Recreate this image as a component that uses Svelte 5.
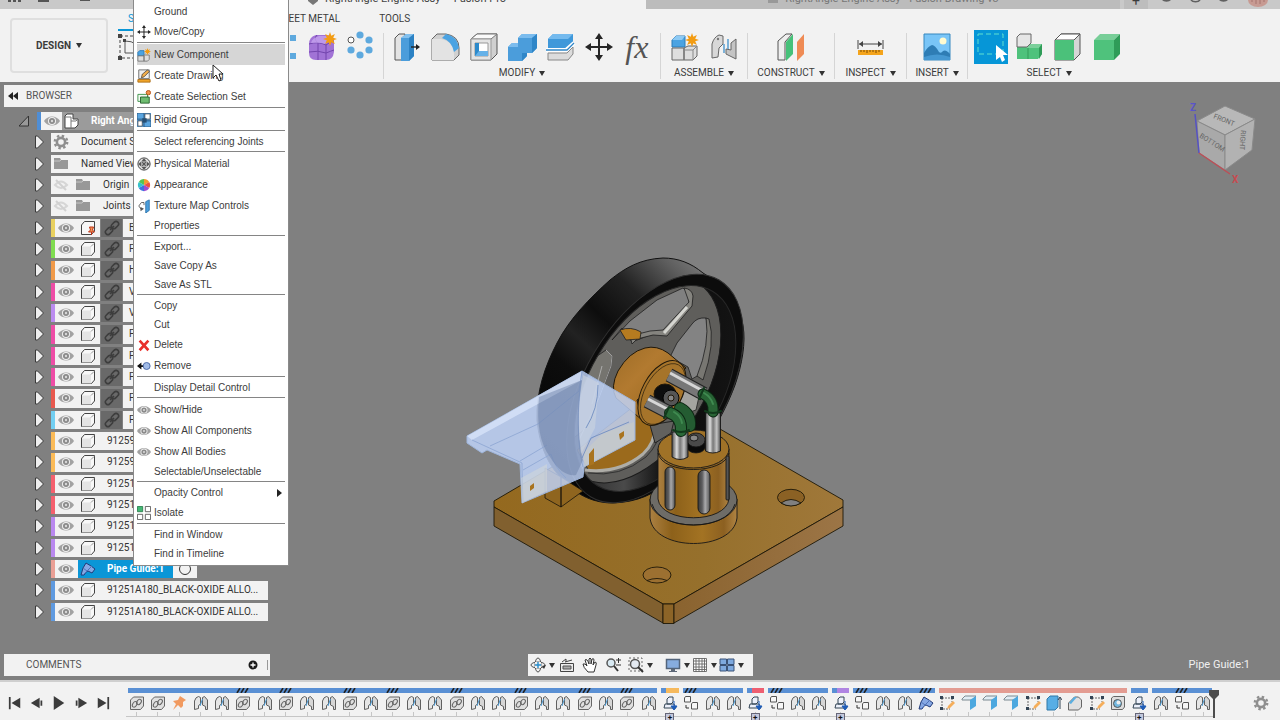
<!--
    App.svelte

    CAD assembly workspace: title strip, ribbon, browser tree, model viewport,
    navigation bar, timeline, and the component context menu.
-->
<script lang="ts">
    type Tool = { icon: string; label: string; active?: boolean };
    type Group = { name: string; size: string; tools: Tool[] };
    type MenuItem = { label: string; icon?: string; sub?: boolean; active?: boolean } | null;

    const EYE =
        '<path d="M0 8C3.500 2 12.500 2 16 8C12.500 14 3.500 14 0 8Z" fill="#a2a2a2"/><circle cx="8" cy="8" r="4" fill="#f0f0f0"/><circle cx="8" cy="8" r="3" fill="#8a8a8a"/><circle cx="8" cy="8" r="1.200" fill="#d8d8d8"/>';
    const STAR = (x: number, y: number, r: number) => {
        let pts = "";
        for (let i = 0; i < 16; i++) {
            const a = (i * Math.PI) / 8;
            const d = i % 2 ? r * 0.5 : r;
            pts += `${(x + d * Math.cos(a)).toFixed(1)},${(y + d * Math.sin(a)).toFixed(1)} `;
        }
        return `<polygon points="${pts}" fill="#f39c12"/>`;
    };
    const GEAR =
        '<circle cx="8" cy="8" r="4.1" fill="none" stroke="#8f8f8f" stroke-width="2.6"/><circle cx="8" cy="8" r="6.2" fill="none" stroke="#8f8f8f" stroke-width="2.4" stroke-dasharray="2.4 2.47"/>';
    const MOVE =
        '<path d="M14 0l4 6h-3v7h7v-3l6 4-6 4v-3h-7v7h3l-4 6-4-6h3v-7H6v3l-6-4 6-4v3h7V6h-3z" fill="#262626"/>';

    // 28x28 ribbon artwork
    const ribbonArt: Record<string, string> = {
        sketch: '<rect x="3" y="3" width="24" height="22" fill="none" stroke="#444" stroke-dasharray="3 2"/><path d="M8 8v12h14M8 8q14 0 14 12" fill="none" stroke="#555"/><path d="M1 1h4v4H1zM1 23h4v4H1zM6 6h3v3H6z" fill="#444"/>',
        box: '<path d="M3 9l6-6h16v16l-6 6H3z" fill="#ddd" stroke="#555"/>',
        pattern: '<path d="M2 2h6v6H2zM20 2h6v6h-6zM2 20h6v6H2zM20 20h6v6h-6z" fill="#5ea9de"/>',
        form: `<path d="M1 11q0-7 7-9h11q7 0 7 6v11q-1 8-8 8H8q-7 0-7-7z" fill="#a173d6"/><path d="M1 11q9-3 17 1q5-4 8-4M18 12v15M10 10v17M1 19q9-2 17 1q5-2 8-3M9 2q-4 4 1 8" fill="none" stroke="#7245ad"/><path d="M3 10q1-5 8-7h7q4 1 2 5l-3 3q-6-2-14-1z" fill="#c6a3ef" opacity=".8"/>${STAR(22, 6, 7)}`,
        circular: '<circle cx="5" cy="7" r="3" fill="#fff" stroke="#555"/><g fill="#5ea9de"><circle cx="14" cy="2" r="3.600"/><circle cx="23" cy="7" r="3.600"/><circle cx="23" cy="17" r="3.600"/><circle cx="14" cy="22" r="3.600"/><circle cx="5" cy="17" r="3.600"/></g>',
        press: '<path d="M2 5l4-4h6v26H2z" fill="#e3e3e3" stroke="#555"/><path d="M8 5l5-4h8v22l-5 5H8z" fill="#4b9ddb"/><path d="M8 5l5-4h8l-5 4z" fill="#82c0ee"/><path d="M16 5l5-4v22l-5 5z" fill="#2c82c4"/><path d="M18 14h6" stroke="#222" stroke-width="1.4"/><path d="M23 11l4 3-4 3z" fill="#222"/>',
        fillet: '<path d="M1 6l5-5h9q13 2 13 14v7l-5 5H1z" fill="#d0d0d0" stroke="#666"/><path d="M1 6h9q12 2 13 15v6H1z" fill="#e3e3e3"/><path d="M11 5l4-4q11 2 13 14l-5 4Q21 8 11 5z" fill="#4ba3e2"/>',
        shell: '<path d="M1 6l6-5h20v20l-6 6H1z" fill="#d0d0d0" stroke="#555"/><path d="M1 6l6-5h20l-6 5z" fill="#fafafa" stroke="#777"/><path d="M1 6h20v21H1z" fill="#e4e4e4" stroke="#999"/><path d="M5 10h13v13H5z" fill="#fff" stroke="#999"/><path d="M5 10h4v8h9v5H5z" fill="#2c8acb"/><path d="M9 18l-4 5h13v-5z" fill="#65b1e8"/>',
        combine: '<path d="M0 14l4-4h6V5l4-4h15v14l-5 5h-5v3l-5 5H0z" fill="#4b9ddb"/><path d="M10 5l4-4h15l-5 4zM0 14l4-4h6v4z" fill="#7bbcee"/><path d="M24 5l5-4v14l-5 5h-5v3l-5 5v-8h10z" fill="#2f86c8"/>',
        split: '<path d="M2 6l5-5h20v9l-5 5H2z" fill="#3f98da"/><path d="M2 6l5-5h20l-5 5z" fill="#74baee"/><path d="M0 17h20l8-7" fill="none" stroke="#fff" stroke-width="4"/><path d="M0 17h21l7-7" fill="none" stroke="#2f86c8" stroke-width="1.3"/><path d="M2 20h19l6-6v7l-5 6H2z" fill="#dcdcdc" stroke="#888"/>',
        move: MOVE,
        newComp: `<path d="M1 7l4-4h9v11H1z" fill="#4ba3e2" stroke="#2c7db8"/><path d="M1 7l4-4h9l-3 4z" fill="#8dcaf4"/><path d="M1 15h12v12H1zM13 15l4-2h9v10l-4 4h-9z" fill="#dedede" stroke="#666"/><path d="M13 17h9l4-4M22 17v10M13 15v12" stroke="#888" fill="none"/>${STAR(21, 7, 7)}`,
        joint: '<path d="M2 25V11q2-7 7-9l4 1v8l-4 4-1 9z" fill="#d8d8d8" stroke="#666"/><path d="M26 26V6l-5 4v7l-5-1v5z" fill="#c4c4c4" stroke="#666"/><path d="M18 6v10M14 11v9" stroke="#3188c7" stroke-width="1.2"/><circle cx="8" cy="6" r="1.200" fill="#777"/>',
        construct: '<path d="M1 8l8-7h6L8 9v18H1z" fill="#eee" stroke="#555"/><path d="M9 9l7-8v20l-7 7z" fill="#46c179"/><path d="M20 9l7-8v20l-7 7z" fill="#ef8b55"/>',
        measure: '<path d="M1 7v9M26 7v9M2 11h23" stroke="#444" fill="none"/><path d="M2 11l4-3v6zM25 11l-4-3v6z" fill="#444"/><path d="M1 17h25v5H1z" fill="#f4a41c"/><path d="M4 17v2M7 17v2M10 17v3M13 17v2M16 17v2M19 17v3M22 17v2" stroke="#7c4b00"/>',
        insert: '<path d="M1 1h26v26H1z" fill="#79c5f7" stroke="#3788bf"/><circle cx="20" cy="8" r="3.5" fill="#fffbd0"/><path d="M1 20q4-7 8-8 3 0 7 7 2 2 4-1 3-2 7 3v6H1z" fill="#2e7db5"/><path d="M1 24q13-5 26 0v3H1z" fill="#4598d2"/>',
        select: '<path d="M1 1h25v20H1z" fill="none" stroke="#5fe0d0" stroke-dasharray="5 3"/><path d="M19 12v15l4-3 2 5 3-2-2-5h5z" fill="#fff"/>',
        selComp: '<path d="M1 14h9l4-3h12v10l-4 5H1z" fill="#4fc27c"/><path d="M14 11h12l-3 4H10z" fill="#7bd09b"/><path d="M23 15l3-4v10l-3 5z" fill="#2f9c58"/><path d="M12 15v11" stroke="#349b59"/><path d="M1 4l3-3h11v9l-4 4H1z" fill="#e6e6e6" stroke="#666"/>',
        selFace: '<path d="M1 7l6-6h19v20l-6 6H1z" fill="#d6d6d6" stroke="#555"/><path d="M1 7l6-6h19l-6 6z" fill="#fff" stroke="#555"/><path d="M1 7h19v20H1z" fill="#4bc17a"/>',
        selBody: '<path d="M1 7l6-6h20l-6 6z" fill="#78ce98"/><path d="M1 7h20v20H1z" fill="#4fc27c"/><path d="M21 7l6-6v20l-6 6z" fill="#2f9c58"/>',
    };

    // 16x16 artwork used by the menu, tree and timeline
    const art: Record<string, string> = {
        eye: EYE,
        eyeOff: '<g opacity=".45"><path d="M2 8q6-7 12 0q-6 6-12 0z" fill="none" stroke="#b5b5b5" stroke-width="2"/><path d="M3 3l10 10" stroke="#aaa" stroke-width="2"/></g>',
        gear: GEAR,
        folder: '<path d="M1 2h6l1 2h7v9H1z" fill="#989898"/><path d="M1 5h6l1-1" fill="none" stroke="#c5c5c5"/>',
        cube: '<path d="M1.500 5l3-3.500h10v9.500l-3 3.500h-10z" fill="#f8f8f8" stroke="#444" stroke-linejoin="round"/><path d="M2 5.500h9v9H2z" fill="#e4e4e4"/><path d="M11 5.500l3-3" stroke="#999"/>',
        cubePin: '<path d="M1.500 5l3-3.500h10v9.500l-3 3.500h-10z" fill="#f8f8f8" stroke="#444"/><path d="M9.500 7h4l-1 3 2 2h-6l2-2z" fill="#f39a58" stroke="#bd3216"/><path d="M11.500 12v3" stroke="#bd3216"/>',
        assembly: '<path d="M1 3l2-2h6v5h5v6l-3 3H1z" fill="#fff" stroke="#444"/><path d="M1 4h6v11M7 8h5l2-2" fill="none" stroke="#777"/>',
        link: '<g fill="none" stroke="#3d3d3d" stroke-width="1.600"><rect x="7" y="2.500" width="8" height="5" rx="2.500" transform="rotate(-45 11 5)"/><rect x="1" y="8.500" width="8" height="5" rx="2.500" transform="rotate(-45 5 11)"/><path d="M6 10l4-4"/></g>',
        pipe: '<path d="M1 14l2-7 3-5 5 3 4 3-3 4-4-2-2 1-2 3z" fill="#86a8e4" stroke="#223b78"/><path d="M3 7l4 3 5-5M7 10l-4 4" stroke="#4f72b7" fill="none"/>',
        move: `<g transform="scale(.57)">${MOVE}</g>`,
        newComp: `<path d="M1 5l2-2h5v6H1z" fill="#4ba3e2" stroke="#2c7db8"/><path d="M1 9h7v6H1zM8 8h6v5l-2 2H8z" fill="#ddd" stroke="#777"/>${STAR(12, 4, 4)}`,
        drawing: '<path d="M2 1h12v10H2z" fill="#eee" stroke="#666"/><path d="M5 10l1-4 6-5 2 2-6 6z" fill="#f3ae4a" stroke="#333" stroke-width=".8"/><path d="M1 12h14v3H1z" fill="#f0a429" stroke="#aa6b13"/>',
        selectSet: '<path d="M1 5h11v8H1z" fill="#f2faf2" stroke="#348b40"/><path d="M4 8h10v7H4z" fill="#6ebc70" stroke="#245c28"/><circle cx="13" cy="3" r="2.500" fill="#ef9147" stroke="#b44d0d"/>',
        rigid: '<path d="M0 0h16v16H0z" fill="#4d98d8"/><path d="M9 1h6v6H9zM1 9h5v6H1z" fill="#fff" stroke="#4f565c"/><path d="M0 0h8v7H0zM8 9h8v7H8z" fill="#5aa5e0" stroke="#29567d"/><path d="M6 6h5v5H6z" fill="#264f73"/>',
        material: '<circle cx="8" cy="8" r="7" fill="#ddd" stroke="#333"/><path d="M8 1.500l3 3.500H5zM8 14.500l3-3.500H5zM1.500 8L5 5v6zM14.500 8L11 5v6z" fill="#555"/><path d="M6 6l4 4M10 6l-4 4" stroke="#555" stroke-width="1.600"/>',
        appearance: '<path d="M8 8L8 1A7 7 0 0 1 14 4.500z" fill="#f59b2e"/><path d="M8 8L14 4.500A7 7 0 0 1 14 11.500z" fill="#ee5142"/><path d="M8 8L14 11.500A7 7 0 0 1 8 15z" fill="#a34bd0"/><path d="M8 8V15A7 7 0 0 1 2 11.500z" fill="#3d73e0"/><path d="M8 8L2 11.500A7 7 0 0 1 2 4.500z" fill="#35c2cc"/><path d="M8 8L2 4.500A7 7 0 0 1 8 1z" fill="#55c455"/>',
        texture: '<path d="M10 3l4-2v12l-4 3z" fill="#4c9fdc" stroke="#2b72ab"/><path d="M8 4L5 4 2 8l3 4M8 4v3" stroke="#555" fill="none"/><path d="M4 9v5l4-3z" fill="#555"/>',
        delete: '<path d="M3 3l10 11M13 3L3 14" stroke="#e8302c" stroke-width="3"/>',
        remove: '<path d="M0 8l5-4v3h4v2H5v3z" fill="#111"/><circle cx="11" cy="8" r="4" fill="#a2bce8" stroke="#4261a0"/>',
        isolate: '<path d="M.500 .500h6v6h-6z" fill="#43b874" stroke="#287b4a"/><path d="M9.500 .500h6v6h-6zM.500 9.500h6v6h-6zM9.500 9.500h6v6h-6z" fill="#fff" stroke="#555"/>',
        tlLink: '<path d="M1.500 5l3-3h10v9l-3 3.500h-10z" fill="#e0e0e0" stroke="#666"/><g fill="none" stroke="#666"><ellipse cx="6" cy="9.500" rx="2" ry="3" transform="rotate(35 6 9)"/><ellipse cx="10" cy="7" rx="2" ry="3" transform="rotate(35 10 7)"/></g>',
        tlPin: '<path d="M9 1l6 4-3 2v4l-2 2-3-3-5 5 3-6-3-3 5-1z" fill="#f19a60"/>',
        tlJoint: '<path d="M1.500 14.500V6q1-4 4-4.500l2 1V9l-2 1.500v3z" fill="#e6e6e6" stroke="#606060"/><path d="M14.500 14.500V5l-3-3.500-2 1V10l3 1.500v3z" fill="#d6d6d6" stroke="#606060"/><path d="M9.500 4L7 11" stroke="#4799d5"/>',
        tlInsert: '<path d="M2 13l1-4h9l2 4zM5 9V4l2-2h4v5l-2 2z" fill="#edf1fb" stroke="#345"/><path d="M12 6v6M9 11l3 4 3-4z" fill="#1e5cb8" stroke="#1e5cb8"/>',
        tlRigid: '<path d="M1.500 3l1-1.500h5v5.500h-6zM8.500 9l1-1.500h5v6.500h-6z" fill="#f7f7f7" stroke="#555"/><path d="M3 10v3h3" stroke="#333" fill="none"/>',
        tlSketch: '<path d="M3 3h11M3 3v11h8M13 3v4" fill="none" stroke="#666" stroke-dasharray="2 1"/><path d="M1 1h3v3H1zM12 1h3v3h-3zM1 12h3v3H1z" fill="#345"/><path d="M8 14l1-3 5-5 2 2-5 5z" fill="#f5ae5b"/>',
        tlFlange: '<path d="M1 4l3-3h11l-4 4H1z" fill="#e2edf4" stroke="#7d8a91"/><path d="M9 5l6-4v10l-6 4z" fill="#4da8df"/>',
        tlExtrude: '<path d="M1 4l3-3h8v11l-3 3H1z" fill="#58aee5" stroke="#3179a8"/><path d="M14 14V3M12 5l2-3 2 3" stroke="#345" fill="none"/>',
        tlFillet: '<path d="M1.500 8l6-6h4l3 3v7l-3 3h-10z" fill="#e0e0e0" stroke="#666"/><path d="M2 8l5-6h3L4 9z" fill="#5aafe1"/>',
        tlHole: '<path d="M1.500 3l2-1.500h11V12l-2 2.500h-11z" fill="#ddd" stroke="#666"/><circle cx="7.500" cy="8.500" r="4" fill="#74b8df" stroke="#555"/><circle cx="8.500" cy="7.500" r="2" fill="#eee"/>',
        first: '<path d="M1 1h2v14H1zM14 2v12L4 8z" fill="#3c3c3c"/>',
        prev: '<path d="M11 2v12L1 8zM12 5h2v6h-2z" fill="#3c3c3c"/>',
        play: '<path d="M2 0l12 8-12 8z" fill="#3c3c3c"/>',
        next: '<path d="M5 2v12l10-6zM2 5h2v6H2z" fill="#3c3c3c"/>',
        last: '<path d="M13 1h2v14h-2zM2 2v12l10-6z" fill="#3c3c3c"/>',
        orbit: '<g fill="none" stroke="#555"><ellipse cx="8" cy="8" rx="7" ry="3"/><ellipse cx="8" cy="8" rx="3" ry="7"/></g><path d="M5 5h6v6H5z" fill="#f2f2f2"/><path d="M8 5v6M5 8h6" stroke="#278cca" stroke-width="1.400"/><path d="M12 9l4-1-2 4z" fill="#333"/>',
        look: '<path d="M1.500 6.500h13v8h-13z" fill="#ececec" stroke="#444"/><path d="M4 9h8v3H4z" fill="#aaa" stroke="#555"/><path d="M3 5l4-3v3M6 5l7-2" fill="none" stroke="#444"/>',
        hand: '<path d="M6 15Q1 10 1 7q2-1 4 2L3 3q2-2 4 4V2q1-2 2 0v5l1-5q2-1 2 1l-1 5 2-3q2 0 1 3l-2 7z" fill="#fff" stroke="#333"/>',
        zoom: '<circle cx="6" cy="6" r="4" fill="#d9eaf3" stroke="#555" stroke-width="1.500"/><path d="M9 9l4 5" stroke="#333" stroke-width="2"/><path d="M11 3h5M13.500 1v5M11 8h5" stroke="#333"/>',
        zoomWin: '<path d="M1 1h13v13H1z" fill="none" stroke="#666" stroke-dasharray="2 2"/><circle cx="7" cy="7" r="4.500" fill="#e4eaf2" stroke="#555" stroke-width="1.500"/><path d="M10 10l5 5" stroke="#333" stroke-width="2"/>',
        display: '<path d="M1.500 2.500h13v9h-13z" fill="#86acdf" stroke="#53647b" stroke-width="1.500"/><path d="M6 12h4v2h2v1H4v-1h2z" fill="#5d6878"/>',
        grid: '<path d="M1.500 1.500h13v13h-13zM4 1v14M7 1v14M10 1v14M12.500 1v14M1 4h14M1 7h14M1 10h14M1 12.500h14" fill="#fff" stroke="#666" stroke-width=".9"/>',
        views: '<path d="M1 2h6.500v5.500H1zM8.500 2H15v5.500H8.500zM1 8.500h6.500V14H1zM8.500 8.500H15V14H8.500z" fill="#7ea9df" stroke="#3a5277"/>',
    };

    const tabs = ["SOLID", "SURFACE", "SHEET METAL", "TOOLS"];

    const groups: Group[] = [
        {
            name: "CREATE",
            size: "wide",
            tools: [
                { icon: "sketch", label: "Create Sketch" },
                { icon: "box", label: "Box" },
                { icon: "box", label: "Extrude" },
                { icon: "box", label: "Revolve" },
                { icon: "pattern", label: "Rectangular Pattern" },
                { icon: "form", label: "Create Form" },
                { icon: "circular", label: "Circular Pattern" },
            ],
        },
        {
            name: "MODIFY",
            size: "wide",
            tools: [
                { icon: "press", label: "Press Pull" },
                { icon: "fillet", label: "Fillet" },
                { icon: "shell", label: "Shell" },
                { icon: "combine", label: "Combine" },
                { icon: "split", label: "Split Body" },
                { icon: "move", label: "Move/Copy" },
                { icon: "fx", label: "Change Parameters" },
            ],
        },
        {
            name: "ASSEMBLE",
            size: "pair",
            tools: [
                { icon: "newComp", label: "New Component" },
                { icon: "joint", label: "Joint" },
            ],
        },
        { name: "CONSTRUCT", size: "pair", tools: [{ icon: "construct", label: "Offset Plane" }] },
        { name: "INSPECT", size: "single", tools: [{ icon: "measure", label: "Measure" }] },
        { name: "INSERT", size: "small", tools: [{ icon: "insert", label: "Insert Canvas" }] },
        {
            name: "SELECT",
            size: "quad",
            tools: [
                { icon: "select", label: "Window Selection", active: true },
                { icon: "selComp", label: "Component Priority" },
                { icon: "selFace", label: "Face Priority" },
                { icon: "selBody", label: "Body Priority" },
            ],
        },
    ];

    const settings = [
        { label: "Document Settings", icon: "gear", hidden: false },
        { label: "Named Views", icon: "folder", hidden: false },
        { label: "Origin", icon: "folder", hidden: true },
        { label: "Joints", icon: "folder", hidden: true },
    ];

    const parts = [
        { color: "#e8d05f", label: "Base:1", linked: true, icon: "cubePin" },
        { color: "#7fdc50", label: "Flywheel:1", linked: true },
        { color: "#f09a4a", label: "Hub:1", linked: true },
        { color: "#ee4da6", label: "Valve:1", linked: true },
        { color: "#bb8cf0", label: "Valve:2", linked: true },
        { color: "#ee4da6", label: "Piston:1", linked: true },
        { color: "#ee4da6", label: "Piston:2", linked: true },
        { color: "#ee4da6", label: "Piston:3", linked: true },
        { color: "#e8594f", label: "Fitting:1", linked: true },
        { color: "#72cff2", label: "Fitting:2", linked: true },
        { color: "#fbbb58", label: "91259A101_ALLOY STEEL" },
        { color: "#fbbb58", label: "91259A101_ALLOY STEEL" },
        { color: "#f5606e", label: "91251A106_BLACK-OXIDE" },
        { color: "#f5606e", label: "91251A106_BLACK-OXIDE" },
        { color: "#b988ef", label: "91251A108_BLACK-OXIDE" },
        { color: "#b988ef", label: "91251A108_BLACK-OXIDE" },
        { color: "#ea9f95", label: "Pipe Guide:1", icon: "pipe", selected: true },
        { color: "#5f9ae0", label: "91251A180_BLACK-OXIDE ALLO..." },
        { color: "#5f9ae0", label: "91251A180_BLACK-OXIDE ALLO..." },
    ];

    const menu: MenuItem[] = [
        { label: "Ground" },
        { label: "Move/Copy", icon: "move" },
        null,
        { label: "New Component", icon: "newComp", active: true },
        { label: "Create Drawing", icon: "drawing" },
        { label: "Create Selection Set", icon: "selectSet" },
        null,
        { label: "Rigid Group", icon: "rigid" },
        null,
        { label: "Select referencing Joints" },
        null,
        { label: "Physical Material", icon: "material" },
        { label: "Appearance", icon: "appearance" },
        { label: "Texture Map Controls", icon: "texture" },
        { label: "Properties" },
        null,
        { label: "Export..." },
        { label: "Save Copy As" },
        { label: "Save As STL" },
        null,
        { label: "Copy" },
        { label: "Cut" },
        { label: "Delete", icon: "delete" },
        { label: "Remove", icon: "remove" },
        null,
        { label: "Display Detail Control" },
        null,
        { label: "Show/Hide", icon: "eye" },
        { label: "Show All Components", icon: "eye" },
        { label: "Show All Bodies", icon: "eye" },
        { label: "Selectable/Unselectable" },
        null,
        { label: "Opacity Control", sub: true },
        { label: "Isolate", icon: "isolate" },
        null,
        { label: "Find in Window" },
        { label: "Find in Timeline" },
    ];

    // l = linked part, p = pin, j = joint, i = insert, r = rigid group
    const stepIcons: Record<string, string> = {
        l: "tlLink", p: "tlPin", j: "tlJoint", i: "tlInsert", r: "tlRigid", g: "pipe",
        s: "tlSketch", f: "tlFlange", e: "tlExtrude", c: "tlFillet", h: "tlHole",
    };
    const steps = "llpjjljljjljljjljjljjljljirjjirjjirjjgsfffsecshijrj".split("");
    const hatched = [5, 7, 10, 12, 15, 18, 21, 23, 26, 30, 34, 37, 49];
    const bars = [
        { from: 0, span: 25, tint: "" },
        { from: 25, span: 1, tint: "orange" },
        { from: 26, span: 3, tint: "" },
        { from: 29, span: 1, tint: "red" },
        { from: 30, span: 3, tint: "" },
        { from: 33, span: 1, tint: "purple" },
        { from: 34, span: 4, tint: "" },
        { from: 38, span: 9, tint: "salmon" },
        { from: 47, span: 1, tint: "" },
        { from: 48, span: 3, tint: "" },
    ];

    const playback = ["first", "prev", "play", "next", "last"];
    const navTools = [
        { icon: "orbit", caret: true },
        { icon: "look", caret: false },
        { icon: "hand", caret: false },
        { icon: "zoom", caret: false },
        { icon: "zoomWin", caret: true },
        { icon: "display", caret: true },
        { icon: "grid", caret: true },
        { icon: "views", caret: true },
    ];

    let selected = $state(16);
</script>

{#snippet icon(name: string)}
    <svg class="icon" viewBox="0 0 16 16" aria-hidden="true">{@html art[name]}</svg>
{/snippet}

{#snippet arrow()}
    <button class="arrow" aria-label="Expand">
        <svg viewBox="0 0 10 14"><path d="M.500 1v12h2l6-6-6-6z" fill="#eee" stroke="#3a3a3a" /></svg>
    </button>
{/snippet}

<div class="app">
    <header class="titlebar">
        <div class="quick">
            <svg viewBox="0 0 133 9">
                <path d="M8 0h3v2H8zM13 0h3v2h-3zM18 0h3v2h-3zM38 0h11v2H38zM80 0h10v1H80z" fill="#555" />
            </svg>
        </div>
        <button class="doc current">
            <svg viewBox="0 0 12 16"><path d="M1 5l5-4 5 4v5l-5 4-5-4z" fill="#777" /></svg>
            <span>RightAngle Engine Assy* - Fusion Pro</span>
        </button>
        <button class="doc">
            <svg viewBox="0 0 12 16"><path d="M1 2h10v10H1z" fill="#999" /></svg>
            <span>RightAngle Engine Assy - Fusion Drawing v3</span>
        </button>
        <button class="add" aria-label="New tab">+</button>
        <div class="account">
            <svg viewBox="0 0 132 9">
                <path d="M14 0a5 3 0 0 0 9 0zM71 0a5 3 0 0 0 9 0z" fill="#606060" />
                <path d="M43 0a5 3 0 0 0 9 0" fill="none" stroke="#606060" stroke-width="1.500" />
                <path d="M100 0a10 7 0 0 0 20 0z" fill="#c79a92" />
                <path d="M104 0v2M108 0v4M112 0v4M116 0v2" stroke="#a5746f" />
            </svg>
        </div>
    </header>

    <div class="ribbon">
        <button class="workspace-switch">DESIGN <i class="caret"></i></button>
        <div class="ribbon-main">
            <nav class="tabs">
                {#each tabs as tab, i}
                    <button class:active={i === 0}>{tab}</button>
                {/each}
            </nav>
            <div class="groups">
                {#each groups as group}
                    <section class="group {group.size}">
                        <div class="tools">
                            {#each group.tools as tool}
                                <button class="tool" class:active={tool.active} aria-label={tool.label}>
                                    {#if tool.icon === "fx"}
                                        <span class="fx">fx</span>
                                    {:else}
                                        <svg viewBox="0 0 28 28">{@html ribbonArt[tool.icon]}</svg>
                                    {/if}
                                </button>
                            {/each}
                        </div>
                        <button class="group-name">{group.name} <i class="caret"></i></button>
                    </section>
                {/each}
            </div>
        </div>
    </div>

    <main class="workspace">
        <svg class="model" viewBox="0 82 1280 598" preserveAspectRatio="xMidYMid slice" role="img" aria-label="Right angle engine assembly">
            <defs>
                <linearGradient id="plate" x1="0" x2="1"><stop offset="0" stop-color="#94691f" /><stop offset=".6" stop-color="#96702c" /><stop offset="1" stop-color="#a0783a" /></linearGradient>
                <linearGradient id="sideR" x1="0" x2="1"><stop offset="0" stop-color="#8a632f" /><stop offset="1" stop-color="#9c7546" /></linearGradient>
                <linearGradient id="brass" x1="0" x2="1"><stop offset="0" stop-color="#ab8042" /><stop offset=".25" stop-color="#8d611a" /><stop offset=".6" stop-color="#a37323" /><stop offset=".85" stop-color="#8c6021" /><stop offset="1" stop-color="#b08443" /></linearGradient>
                <linearGradient id="steel" x1="0" x2="1"><stop offset="0" stop-color="#4d4d4d" /><stop offset=".3" stop-color="#ddd" /><stop offset=".5" stop-color="#777" /><stop offset=".75" stop-color="#c4c4c4" /><stop offset="1" stop-color="#4a4a4a" /></linearGradient>
                <linearGradient id="slotSteel" x1="0" x2="1"><stop offset="0" stop-color="#3a3a3a" /><stop offset=".35" stop-color="#5e5e60" /><stop offset=".6" stop-color="#a9a9ab" /><stop offset="1" stop-color="#555" /></linearGradient>
                <linearGradient id="rim" gradientUnits="userSpaceOnUse" x1="540" y1="440" x2="705" y2="265"><stop offset="0" stop-color="#050505" /><stop offset=".3" stop-color="#0d0d0d" /><stop offset=".42" stop-color="#222" /><stop offset=".55" stop-color="#0d0d0d" /><stop offset=".72" stop-color="#222" /><stop offset=".9" stop-color="#5e5e5e" /><stop offset="1" stop-color="#7a7a7a" /></linearGradient>
                <linearGradient id="inner" x1="0" x2="1"><stop offset="0" stop-color="#111" /><stop offset=".4" stop-color="#4a4a4a" /><stop offset=".6" stop-color="#0c0c0c" /><stop offset="1" stop-color="#151515" /></linearGradient>
                <linearGradient id="hub" x1="0" y1="0" x2="1" y2="1"><stop offset="0" stop-color="#9d6c26" /><stop offset=".35" stop-color="#b27a30" /><stop offset="1" stop-color="#8e6119" /></linearGradient>
                <clipPath id="opening"><ellipse cx="655" cy="388.500" rx="113" ry="66" transform="rotate(-59.400 655 388.500)" /></clipPath>
            </defs>

            <!-- base plate -->
            <g stroke="#1d1708" stroke-width=".9" stroke-linejoin="round">
                <path d="M494 501L668 399L843 500V507L674 604H663L494 507z" fill="url(#plate)" />
                <path d="M494 507L663 604V623L494 526z" fill="#81602f" />
                <path d="M663 604h11v19.500h-11z" fill="#8c6427" />
                <path d="M674 604L843 507V526L674 623z" fill="url(#sideR)" />
                <ellipse cx="791" cy="497.500" rx="13.500" ry="8.200" fill="#8b6124" />
                <path d="M781 503q10-7 20 0q-10 6-20 0z" fill="#808080" />
                <ellipse cx="657" cy="575" rx="14" ry="8" fill="#9c7031" />
                <path d="M647 580.500q10-4 20 0" fill="none" />
            </g>

            <!-- flywheel -->
            <path d="M663 258C640 259 625 268 610 280C590 298 570 318 557 343C545 366 536 392 537 420C540 449 549 466 563 480C577 496 595 503 613 503C638 502 655 494 670 480C700 455 722 420 735 385C742 365 746 342 743 326C739 302 722 285 703 273C691 263 678 258 663 258z" fill="url(#rim)" stroke="#111" />
            <ellipse cx="655" cy="388.500" rx="126" ry="70.500" transform="rotate(-59.400 655 388.500)" fill="#0c0c0c" stroke="#303030" />
            <g clip-path="url(#opening)">
                <path d="M540 270h210v240H540z" fill="url(#inner)" />
                <ellipse cx="640" cy="380" rx="113" ry="66" transform="rotate(-59.400 640 380)" fill="#5f5e5b" stroke="#1c1c1c" />
                <g stroke="#202020" stroke-width=".8">
                    <path d="M612 340L630 321L657 300L683 288L689 293L689 305L664 333L650 335L632 342L622 328z" fill="#808080" />
                    <path d="M684 288q8 1 9 8l-1 10-25 30-14-1-16 4-5 5-2-8 20-5 13-1 26-28z" fill="#85847f" />
                    <path d="M687 307l-23 26" stroke="#d5d5d0" stroke-width="3" />
                    <path d="M620 330q11-4 21 2l-1 7-14 1z" fill="#b57b20" />
                    <path d="M706 318q-9-1-14 6l-15 19-7 14 18 10 4 12 12-7q9-32 2-54z" fill="#838383" />
                    <path d="M706 318q4 26-9 58l6 4q13-37 6-61z" fill="#787772" />
                    <path d="M606 350l6 6-1 10-12 32-14 31-15 12 17-78z" fill="#75746f" />
                    <path d="M606 350l6 6-1 10-12 32-20 42M602 366l-10 38" fill="none" stroke="#bbb" />
                    <path d="M688 380l12 12-4 18-15 5-5-10z" fill="#a4a4a0" />
                    <path d="M577 450l56-43 22 20q0 16-12 27-24 20-54 17z" fill="#9b6a1c" />
                </g>
                <path d="M655 427q0 16-12 27-24 20-58 16" fill="none" stroke="#aeada7" stroke-width="3" />
                <path d="M659 429q1 14-13 28-26 21-58 16" fill="none" stroke="#333" />
                <path d="M650 425l24-4-3 12-16 10z" fill="#62615e" stroke="#222" />
            </g>
            <ellipse cx="655" cy="388.500" rx="113" ry="66" transform="rotate(-59.400 655 388.500)" fill="none" stroke="#272727" />

            <!-- crank hub -->
            <g stroke="#20180a">
                <path d="M686 368L668 353Q657 345 645 348Q629 352 618 371Q610 387 616 398L648 425Q640 415 637 400z" fill="url(#hub)" />
                <ellipse cx="662" cy="393" rx="35" ry="20" transform="rotate(-62 662 393)" fill="#a6742a" />
                <ellipse cx="663" cy="394" rx="33" ry="18.500" transform="rotate(-62 663 394)" fill="none" stroke-width=".6" />
                <ellipse cx="665" cy="394" rx="11" ry="10" fill="#0d0d0d" />
                <ellipse cx="671" cy="398" rx="8" ry="8" fill="#555" stroke="#000" />
                <circle cx="671" cy="398" r="3" fill="#888" />
            </g>

            <!-- horizontal pipes -->
            <g stroke-linecap="butt">
                <path d="M669 375L704 394" stroke="#222" stroke-width="14" />
                <path d="M669 375L704 394" stroke="#777" stroke-width="12" />
                <path d="M670 373L705 392" stroke="#d6d6d6" stroke-width="3" />
                <path d="M647 401L670 413" stroke="#222" stroke-width="14" />
                <path d="M647 401L670 413" stroke="#777" stroke-width="12" />
                <path d="M648 399L671 411" stroke="#d6d6d6" stroke-width="3" />
            </g>

            <!-- lower cylinder -->
            <g stroke="#161616" stroke-width=".9">
                <path d="M650 499v19c4 34 83 34 87 0v-19z" fill="url(#brass)" />
                <ellipse cx="693.500" cy="500" rx="43.500" ry="25" fill="#6e6c67" />
                <path d="M652 504c8 28 75 28 83 0" fill="none" />
                <path d="M658 449v50c3 25 68 25 71 0v-50z" fill="url(#brass)" />
                <ellipse cx="693.500" cy="449" rx="35.500" ry="19" fill="#a07227" />
                <path d="M658 453c4 22 67 22 71 0" fill="none" />
                <rect x="665" y="467" width="10" height="43" rx="5" fill="url(#slotSteel)" />
                <rect x="698" y="470" width="12" height="44" rx="6" fill="url(#slotSteel)" />
                <rect x="726" y="456" width="3" height="44" rx="1" fill="#555" />
                <path d="M687 441v7c3 7 16 6 18 0v-7z" fill="#0a0a0a" />
                <ellipse cx="696" cy="440" rx="9" ry="7" fill="#4a4a4a" />
                <ellipse cx="694" cy="438" rx="4" ry="3" fill="#888" />
                <path d="M672 432h16v25q-8 5-16 0z" fill="url(#steel)" />
                <path d="M705.500 413h15v38q-8 4-15 0z" fill="url(#steel)" />
            </g>

            <!-- fittings -->
            <g fill="none" stroke-linecap="round">
                <path d="M680 408Q691 414 690 426" stroke="#0c2713" stroke-width="12" />
                <path d="M680 408Q691 414 690 426" stroke="#245c32" stroke-width="10" />
                <path d="M670 413Q682 417 681 431" stroke="#0c2713" stroke-width="12" />
                <path d="M670 413Q682 417 681 431" stroke="#2a6938" stroke-width="10" />
                <path d="M703 394Q714 399 713 412" stroke="#0c2713" stroke-width="11" />
                <path d="M703 394Q714 399 713 412" stroke="#286435" stroke-width="9" />
                <path d="M673 430q8 4 16 0M705 411q8 4 16 0M699 399l5-11M664 418l5-11" stroke="#123a1c" stroke-width="2" />
                <path d="M704 393q7 4 9 11M674 412q7 4 8 11" stroke="#3f8a50" stroke-width="2" />
            </g>

            <!-- rod bracket -->
            <path d="M545 468l16 9v30l-16-9zM561 477l22 14-22 16z" fill="#8f651f" stroke="#17130a" stroke-width=".8" />

            <!-- highlighted pipe guide -->
            <g stroke-linejoin="round">
                <path d="M582 371L635 402V440L584 467L583 477L522 503L520 464L487 450L482 453L467 443V436z" fill="#c1d6fd" fill-opacity=".82" stroke="#9fb5da" />
                <path d="M582 371L467 436l5 4L582 380z" fill="#e2ecff" opacity=".6" />
                <path d="M582 371l-3 20L538 424 490 446M582 371q-8 60 1 96M472 440l50 23q0 12 1 39M520 461l27-16M523 470l28-16M551 454q4 14 15 24" fill="none" stroke="#8ba5d2" stroke-width=".8" />
                <path d="M539 397q-4 40 11 60 12 20 26 18l7-15q-8-38-1-80z" fill="#62789f" opacity=".42" />
                <path d="M583 375l16 8-4 45-14 26q-5-38 2-79z" fill="#cbd3df" opacity=".6" />
                <path d="M584 452l18-18 32-12v18l-50 27z" fill="#cfd0c4" opacity=".45" />
                <path d="M521 478l26-14v27l-25 12z" fill="#d5d9d8" opacity=".5" />
                <path d="M629 422l-38 16-9 20M598 385q0 24-12 43" fill="none" stroke="#6888bf" stroke-width=".8" />
                <path d="M619 434l5-3v5l-4 4zM530 486l4-3v5l-4 3zM589 454l5-6v16l-5 2z" fill="#a9741f" />
            </g>
        </svg>

        <aside class="browser">
            <div class="panel-head">
                <svg viewBox="0 0 10 8"><path d="M5 0v8L0 4zM10 0v8L5 4z" fill="#222" /></svg>
                <span>BROWSER</span>
            </div>
            <ul class="tree">
                <li class="root">
                    <button class="arrow" aria-label="Collapse">
                        <svg viewBox="0 0 10 14"><path d="M9.500 2v10H0z" fill="#999" stroke="#333" /></svg>
                    </button>
                    <div class="cell grow">
                        <i class="swatch blue"></i>
                        {@render icon("eye")}
                        <span class="root-name">{@render icon("assembly")} Right Angle Engine Assy</span>
                    </div>
                </li>
                {#each settings as row}
                    <li>
                        {@render arrow()}
                        <div class="cell grow setting">
                            {#if row.hidden}{@render icon("eyeOff")}{/if}
                            {@render icon(row.icon)}
                            <span>{row.label}</span>
                        </div>
                    </li>
                {/each}
                {#each parts as part, i}
                    <li>
                        {@render arrow()}
                        {#if selected === i}
                            <div class="cell">
                                <i class="swatch" style:background={part.color}></i>
                                {@render icon("eye")}
                                <button class="name picked" onclick={() => (selected = i)}>{@render icon(part.icon ?? "cube")}<span>{part.label}</span></button>
                                <label class="activate"><input type="radio" name="activate" aria-label="Activate component" /></label>
                            </div>
                        {:else if part.linked}
                            <div class="cell">
                                <i class="swatch" style:background={part.color}></i>
                                {@render icon("eye")}
                                <button class="name short" aria-label={part.label} onclick={() => (selected = i)}>{@render icon(part.icon ?? "cube")}</button>
                            </div>
                            <div class="chain">{@render icon("link")}</div>
                            <div class="cell grow linked-name">{part.label}</div>
                        {:else}
                            <div class="cell grow">
                                <i class="swatch" style:background={part.color}></i>
                                {@render icon("eye")}
                                <button class="name" onclick={() => (selected = i)}>{@render icon("cube")}<span>{part.label}</span></button>
                            </div>
                        {/if}
                    </li>
                {/each}
            </ul>
        </aside>

        <svg class="viewcube" viewBox="0 0 80 90" role="img" aria-label="View cube">
            <path d="M9 23L37 8l30 13-30 16z" fill="#b8b8b8" stroke="#8a8a8a" />
            <path d="M9 23l28 14v35L11 55z" fill="#a9a9a9" stroke="#8a8a8a" />
            <path d="M37 37l30-16-3 31-27 20z" fill="#b2b2b2" stroke="#8a8a8a" />
            <path d="M7 16l4 39" stroke="#5551c4" stroke-width="1.500" />
            <path d="M11 55l31 21" stroke="#bd4e56" stroke-width="1.500" />
            <text class="axis" x="2" y="13" fill="#5a54c8">Z</text>
            <text class="axis" x="44" y="85" fill="#c64b50">X</text>
            <text class="face" x="25" y="20" transform="rotate(22 25 20)">FRONT</text>
            <text class="face" x="11" y="39" transform="rotate(32 11 39)">BOTTOM</text>
            <text class="face" x="53" y="32" transform="rotate(94 53 32)">RIGHT</text>
        </svg>

        <div class="bottom-row">
            <div class="panel-head comments">
                <span>COMMENTS</span>
                <button aria-label="Add comment">
                    <svg viewBox="0 0 10 10"><circle cx="5" cy="5" r="4.500" fill="#1a1a1a" /><path d="M5 2.500v5M2.500 5h5" stroke="#fff" stroke-width="1.300" /></svg>
                </button>
                <i class="grip"></i>
            </div>
            <div class="navbar">
                {#each navTools as tool}
                    <button class={tool.icon} aria-label={tool.icon}>
                        {@render icon(tool.icon)}
                        {#if tool.caret}<i class="caret"></i>{/if}
                    </button>
                {/each}
            </div>
            <div class="status">Pipe Guide:1</div>
        </div>
    </main>

    <footer class="timeline">
        <div class="playback">
            {#each playback as action}
                <button aria-label={action}>{@render icon(action)}</button>
            {/each}
        </div>
        <div class="track">
            <div class="lane bars">
                {#each bars as bar}
                    <i class="bar {bar.tint}" style:grid-column="{bar.from + 1} / span {bar.span}"></i>
                {/each}
                {#each hatched as col}
                    <svg class="hatch" viewBox="0 0 14 5" style:grid-column={col + 1}>
                        <path d="M1 5l3-5M5 5l3-5M9 5l3-5" stroke="#222" stroke-width="1.600" />
                    </svg>
                {/each}
            </div>
            <div class="lane steps">
                {#each steps as step}
                    <button aria-label={stepIcons[step]}>{@render icon(stepIcons[step])}</button>
                {/each}
            </div>
            <div class="lane ruler">
                {#each steps as step}
                    <span>{#if step === "i"}<b>+</b>{/if}</span>
                {/each}
            </div>
            <svg class="playhead" viewBox="0 0 12 28"><path d="M1 0h10v5L7 9v19H5V9L1 5z" fill="#4d4d4d" /></svg>
        </div>
        <button class="timeline-settings" aria-label="Timeline settings">{@render icon("gear")}</button>
    </footer>

    <div class="context-menu" role="menu">
        {#each menu as item}
            {#if item === null}
                <hr />
            {:else}
                <button role="menuitem" class:tall={item.icon} class:active={item.active}>
                    <span class="slot">{#if item.icon}{@render icon(item.icon)}{/if}</span>
                    <span>{item.label}</span>
                    {#if item.sub}<i class="sub"></i>{/if}
                </button>
            {/if}
        {/each}
    </div>

    <svg class="pointer" viewBox="0 0 12 18" aria-hidden="true">
        <path d="M1 1v13l3-3 3 6 2-1-2-6h4z" fill="#fff" stroke="#222" />
    </svg>
</div>

<style>
    :global(body) {
        margin: 0;
    }

    .app {
        position: relative;
        display: flex;
        flex-direction: column;
        height: 100vh;
        overflow: hidden;
        background: #808080;
        color: #3c3c3c;
        font: 10px/16px Roboto, sans-serif;
    }

    button {
        display: flex;
        align-items: center;
        justify-content: center;
        margin: 0;
        padding: 0;
        border: 0;
        background: none;
        color: inherit;
        font: inherit;
        white-space: nowrap;
    }

    svg {
        display: block;
        flex: none;
    }

    .icon {
        width: 16px;
        height: 16px;
    }

    .caret {
        width: 0;
        border: 3px solid transparent;
        border-top: 5px solid #333;
        border-bottom: 0;
    }

    /* --- Title strip --- */
    .titlebar {
        display: flex;
        flex: none;
        align-items: flex-end;
        height: 9px;
        background: #c9c9c9;
    }

    .quick {
        flex: 0 0 289px;
        height: 9px;
    }

    .quick svg {
        width: 133px;
        height: 9px;
    }

    .doc {
        flex: 1 1 474px;
        align-items: flex-end;
        gap: 6px;
        height: 9px;
        background: #bcbcbc;
        color: #777;
        font-size: 11px;
    }

    .doc.current {
        flex: 0 1 357px;
        justify-content: flex-start;
        padding-left: 18px;
        background: #f2f2f2;
        color: #444;
    }

    .doc svg {
        width: 12px;
        height: 16px;
        margin-bottom: 2px;
    }

    .doc span {
        margin-bottom: 2px;
    }

    .add {
        align-items: flex-end;
        width: 24px;
        height: 9px;
        margin-left: 4px;
        background: #bdbdbd;
        font-size: 14px;
    }

    .account,
    .account svg {
        width: 132px;
        height: 9px;
    }

    /* --- Ribbon --- */
    .ribbon {
        display: flex;
        flex: none;
        height: 73px;
        padding-left: 10px;
        background: #f2f2f2;
    }

    .workspace-switch {
        align-self: center;
        gap: 5px;
        box-sizing: border-box;
        width: 98px;
        height: 55px;
        border: 2px solid #dfdfdf;
        border-radius: 4px;
        font-weight: 700;
    }

    .ribbon-main {
        display: flex;
        flex-direction: column;
    }

    .tabs {
        display: flex;
        gap: 39px;
        height: 22px;
        padding-left: 20px;
    }

    .tabs button {
        box-sizing: border-box;
        height: 22px;
        padding-bottom: 1px;
        border-bottom: 2px solid transparent;
    }

    .tabs .active {
        margin-left: -10px;
        padding-left: 10px;
        border-color: #0a96d7;
        color: #0a96d7;
    }

    .groups {
        display: flex;
    }

    .group {
        box-sizing: border-box;
        height: 46px;
        margin-top: 2px;
        padding: 0 4px;
        border-right: 1px solid #d5d5d5;
    }

    .wide {
        width: 277px;
    }

    .wide:first-child {
        width: 276px;
    }

    .pair {
        width: 87px;
    }

    .single {
        width: 72px;
    }

    .small {
        width: 61px;
    }

    .quad {
        width: 162px;
        border-right: 0;
    }

    .tools {
        display: grid;
        grid-auto-flow: column;
        grid-auto-columns: 1fr;
        justify-items: center;
        height: 32px;
    }

    .tool {
        width: 34px;
        height: 34px;
        margin-top: -3px;
    }

    .tool.active {
        background: #0696d7;
    }

    .tool svg {
        width: 28px;
        height: 28px;
        overflow: visible;
    }

    .fx {
        color: #555;
        font: italic 32px/30px "Liberation Serif", serif;
    }

    .group-name {
        gap: 4px;
        width: 100%;
        height: 16px;
    }

    /* --- Workspace --- */
    .workspace {
        display: grid;
        flex: 1;
        min-height: 0;
    }

    .workspace > * {
        grid-area: 1 / 1;
    }

    .model {
        width: 100%;
        height: 100%;
        min-height: 0;
        overflow: hidden;
    }

    .browser {
        width: 268px;
        padding-top: 3px;
    }

    .panel-head {
        display: flex;
        align-items: center;
        gap: 8px;
        box-sizing: border-box;
        width: 266px;
        height: 22px;
        margin-left: 4px;
        padding: 0 4px;
        background: #f2f2f2;
        color: #555;
    }

    .panel-head svg {
        width: 10px;
        height: 8px;
    }

    .tree {
        display: grid;
        grid-auto-rows: 1fr;
        gap: 3px;
        height: 509px;
        margin: 5px 0 0;
        padding: 0;
        list-style: none;
    }

    .tree li {
        display: flex;
        gap: 1px;
        padding-left: 35px;
        color: #333;
    }

    .tree .root {
        padding-left: 19px;
    }

    .root .arrow {
        width: 17px;
        justify-content: flex-start;
    }

    .arrow {
        flex: none;
        width: 15px;
        justify-content: flex-start;
    }

    .arrow svg {
        width: 10px;
        height: 14px;
    }

    .cell {
        display: flex;
        align-items: center;
        min-width: 0;
        background: #f2f2f2;
        white-space: nowrap;
    }

    .grow {
        flex: 1;
    }

    .swatch {
        flex: none;
        align-self: stretch;
        width: 4px;
        margin-right: 3px;
    }

    .blue {
        background: #4f8ed6;
    }

    .root-name {
        display: flex;
        flex: 1;
        align-items: center;
        align-self: stretch;
        gap: 11px;
        margin-left: 2px;
        padding-left: 2px;
        overflow: hidden;
        background: #9b9b9b;
        color: #fff;
        font-weight: 700;
    }

    .setting {
        gap: 6px;
        padding-left: 2px;
    }

    .setting span {
        padding-left: 6px;
    }

    .name {
        align-self: stretch;
        gap: 11px;
        padding: 0 6px;
    }

    .short {
        padding-right: 4px;
    }

    .picked {
        margin-left: 4px;
        padding: 0 9px 0 2px;
        background: #0a96d7;
        color: #fff;
        font-weight: 700;
    }

    .activate {
        display: flex;
        padding: 0 4px;
    }

    .activate input {
        width: 12px;
        height: 12px;
        margin: 0 2px;
        border: 1px solid #333;
        border-radius: 50%;
        appearance: none;
    }

    .chain {
        display: flex;
        flex: none;
        align-items: center;
        justify-content: center;
        width: 21px;
        background: #696969;
    }

    .linked-name {
        padding-left: 6px;
    }

    .viewcube {
        justify-self: end;
        width: 80px;
        height: 90px;
        margin: 16px 12px 0 0;
    }

    .axis {
        font: 700 10px Roboto, sans-serif;
    }

    .face {
        fill: #666;
        font: 7px Roboto, sans-serif;
    }

    .bottom-row {
        display: grid;
        grid-template-columns: 1fr auto 1fr;
        align-items: center;
        align-self: end;
        padding-bottom: 4px;
    }

    .comments {
        padding: 0 2px 0 22px;
    }

    .comments button {
        margin-left: auto;
    }

    .comments button svg {
        width: 10px;
        height: 10px;
    }

    .grip {
        width: 1px;
        height: 10px;
        border-right: 1px solid #999;
    }

    .navbar {
        display: flex;
        gap: 7px;
        box-sizing: border-box;
        width: 225px;
        height: 22px;
        padding: 0 2px;
        background: #f2f2f2;
    }

    .navbar button {
        gap: 3px;
    }

    .navbar .orbit {
        margin-right: -3px;
    }

    .navbar .zoomWin {
        margin-right: 5px;
    }

    .navbar .display,
    .navbar .grid {
        margin-right: -5px;
    }

    .status {
        justify-self: end;
        padding-right: 30px;
        color: #f0f0f0;
        font-size: 11px;
    }

    /* --- Timeline --- */
    .timeline {
        display: flex;
        flex: none;
        box-sizing: border-box;
        height: 40px;
        padding-top: 6px;
        border-top: 2px solid #cfcfcf;
        background: #f2f2f2;
    }

    .playback {
        display: flex;
        gap: 8px;
        align-items: center;
        width: 118px;
        height: 30px;
        padding-left: 8px;
    }

    .playback .icon {
        width: 14px;
        height: 14px;
    }

    .track {
        position: relative;
        width: 1088px;
    }

    .lane {
        display: grid;
        grid-template-columns: repeat(51, 1fr);
    }

    .bars {
        height: 5px;
    }

    .bar {
        grid-row: 1;
        margin: 0 2px;
        background: #5a90d4;
    }

    .orange {
        background: linear-gradient(90deg, #5a90d4 5px, #f6b95c 5px);
    }

    .red {
        background: linear-gradient(90deg, #5a90d4 5px, #ee5f71 5px);
    }

    .purple {
        background: linear-gradient(90deg, #5a90d4 5px, #b084e2 5px);
    }

    .salmon {
        background: #e39c92;
    }

    .hatch {
        grid-row: 1;
        justify-self: center;
        width: 14px;
        height: 5px;
    }

    .steps {
        height: 19px;
    }

    .ruler {
        height: 5px;
    }

    .ruler span {
        position: relative;
        border-bottom: 1px solid #c6c6c6;
        background: linear-gradient(#c6c6c6, #c6c6c6) center / 1px 100% no-repeat;
    }

    .ruler b {
        position: absolute;
        top: 1px;
        left: 6px;
        width: 7px;
        height: 7px;
        border: 1px solid #667;
        background: #c4c8dc;
        color: #111;
        font-size: 8px;
        line-height: 7px;
        text-align: center;
    }

    .playhead {
        position: absolute;
        top: 2px;
        right: -6px;
        width: 12px;
        height: 28px;
    }

    .timeline-settings {
        height: 30px;
        margin: 0 11px 0 auto;
    }

    /* --- Context menu --- */
    .context-menu {
        position: absolute;
        top: 0;
        left: 133px;
        box-sizing: border-box;
        width: 156px;
        padding: 2px 3px;
        border: solid #8a8a8a;
        border-width: 0 1px 1px;
        background: #fff;
        font-family: "Liberation Sans", sans-serif;
    }

    .context-menu button {
        justify-content: flex-start;
        width: 100%;
        height: 19px;
        text-align: left;
    }

    .context-menu .tall {
        height: 21px;
    }

    .context-menu .active {
        background: #d6d6d6;
    }

    .context-menu hr {
        height: 1px;
        margin: 0 0 1px;
        border: 0;
        background: #858585;
    }

    .slot {
        width: 17px;
    }

    .slot .icon {
        width: 14px;
        height: 14px;
    }

    .sub {
        margin: 0 3px 0 auto;
        border: 4px solid transparent;
        border-right: 0;
        border-left: 5px solid #222;
    }

    .pointer {
        position: absolute;
        top: 64px;
        left: 212px;
        width: 12px;
        height: 18px;
    }
</style>
